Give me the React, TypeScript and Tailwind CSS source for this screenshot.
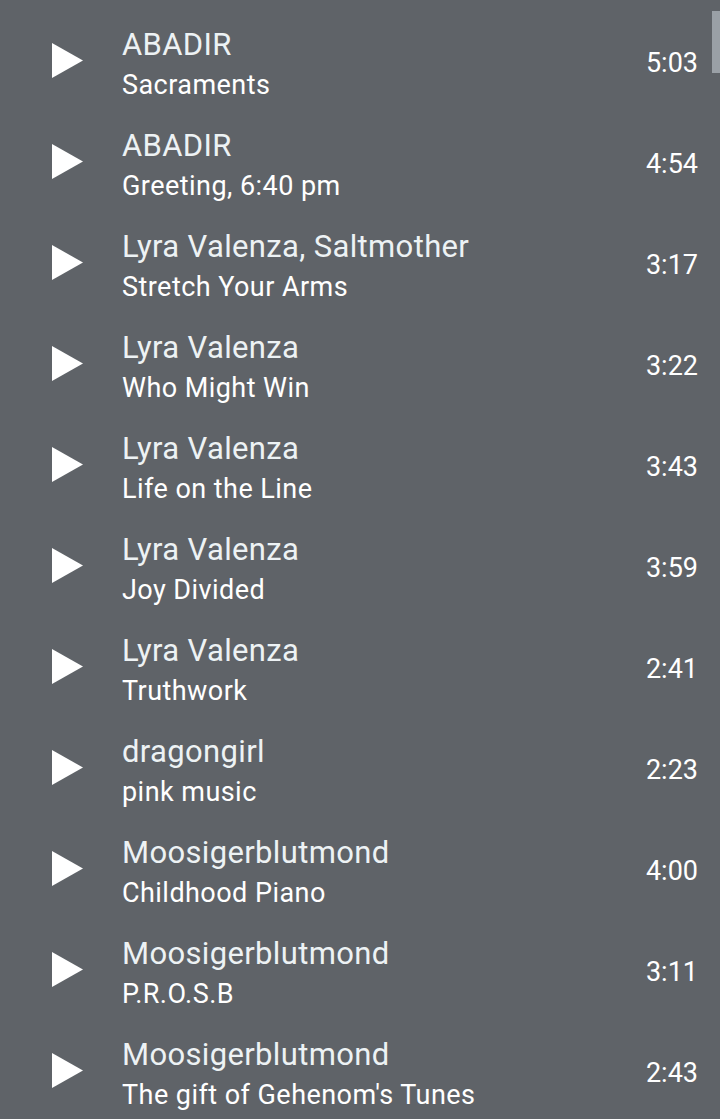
const tracks = [
  { artist: 'ABADIR', title: 'Sacraments', time: '5:03' },
  { artist: 'ABADIR', title: 'Greeting, 6:40 pm', time: '4:54' },
  { artist: 'Lyra Valenza, Saltmother', title: 'Stretch Your Arms', time: '3:17' },
  { artist: 'Lyra Valenza', title: 'Who Might Win', time: '3:22' },
  { artist: 'Lyra Valenza', title: 'Life on the Line', time: '3:43' },
  { artist: 'Lyra Valenza', title: 'Joy Divided', time: '3:59' },
  { artist: 'Lyra Valenza', title: 'Truthwork', time: '2:41' },
  { artist: 'dragongirl', title: 'pink music', time: '2:23' },
  { artist: 'Moosigerblutmond', title: 'Childhood Piano', time: '4:00' },
  { artist: 'Moosigerblutmond', title: 'P.R.O.S.B', time: '3:11' },
  { artist: 'Moosigerblutmond', title: "The gift of Gehenom's Tunes", time: '2:43' },
]

function PlayIcon() {
  return (
    <svg width="31" height="35" viewBox="0 0 31 35" className="shrink-0">
      <path d="M0 0 L31 17.5 L0 35 Z" fill="#ffffff" />
    </svg>
  )
}

export default function App() {
  return (
    <div className="relative h-[1119px] w-[720px] overflow-hidden bg-[#5f6368] pt-[10px] font-['Roboto',sans-serif]">
      {tracks.map((t, i) => (
        <div key={i} className="flex h-[101px] items-center pl-[52px] pr-[22px]">
          <PlayIcon />
          <div className="ml-[39px] mt-[7px] flex min-w-0 flex-1 flex-col">
            <span className="truncate text-[31px] leading-[36px] tracking-[0.35px] text-[#edf2f4]">{t.artist}</span>
            <span className="mt-[5px] truncate text-[27px] leading-[34px] tracking-[0.45px] text-white">{t.title}</span>
          </div>
          <span className="mt-[4px] text-[27px] leading-[32px] text-white">{t.time}</span>
        </div>
      ))}
      <div className="absolute right-0 top-[11px] h-[62px] w-[8px] bg-[#9aa0a6]" />
    </div>
  )
}
